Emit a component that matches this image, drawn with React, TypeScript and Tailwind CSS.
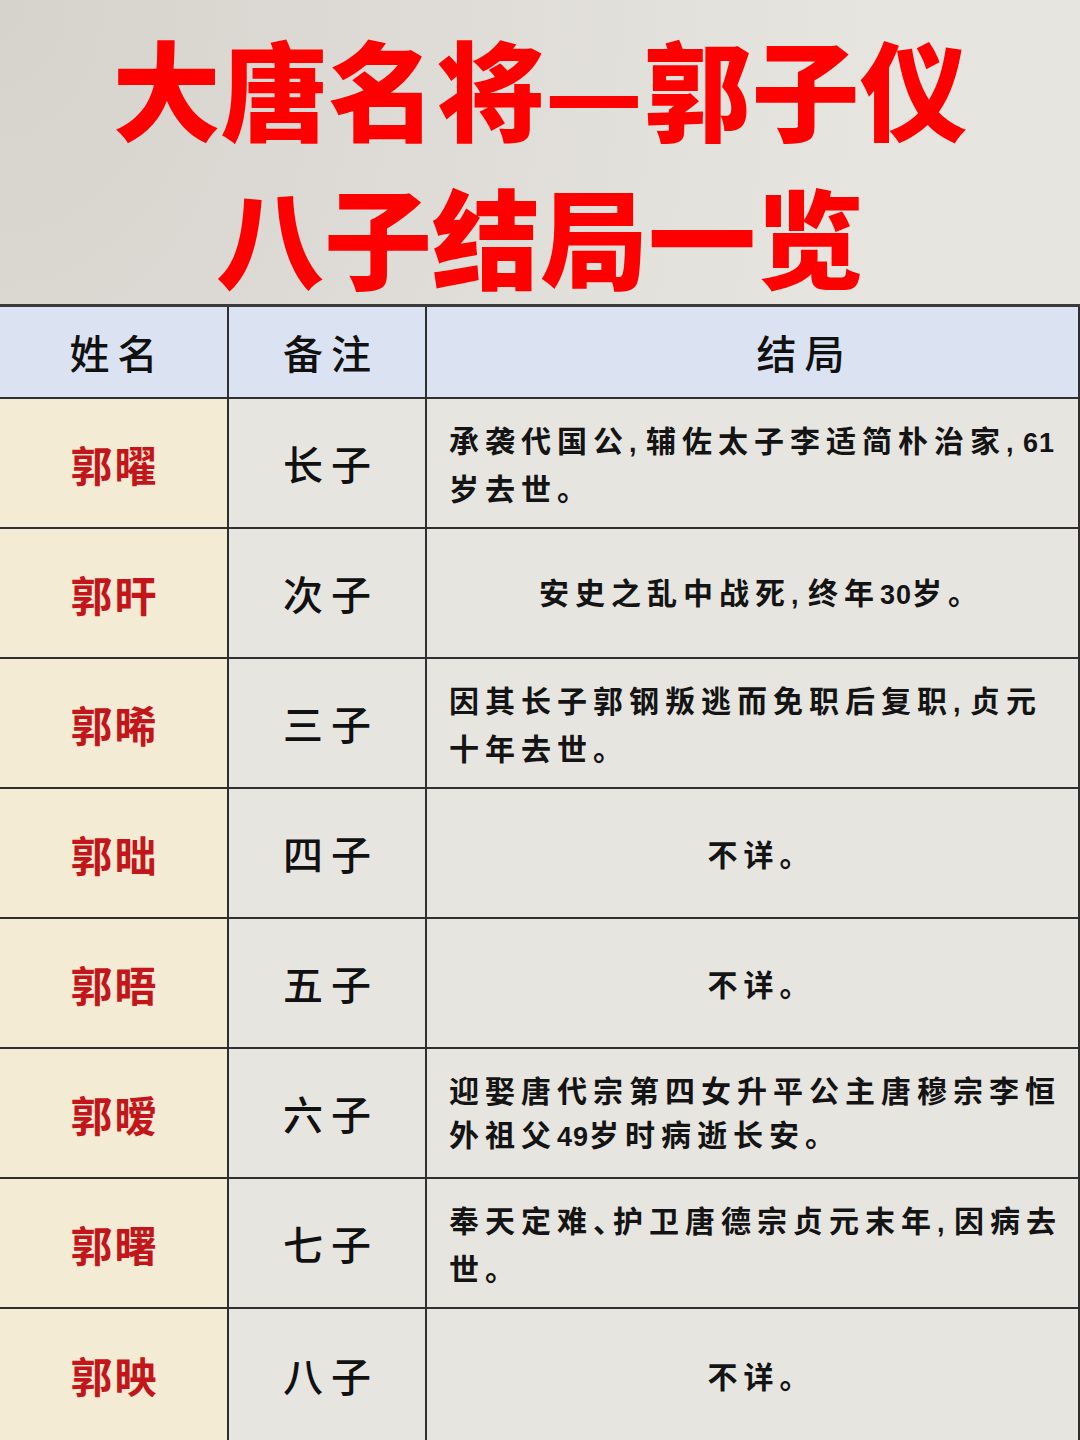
import React from "react";

const rows: { name: string; note: string; lines: string[]; center?: boolean }[] = [
  { name: "郭曜", note: "长子", lines: ["承袭代国公, 辅佐太子李适简朴治家, 61", "岁去世。"] },
  { name: "郭旰", note: "次子", lines: ["安史之乱中战死, 终年30岁。"], center: true },
  { name: "郭晞", note: "三子", lines: ["因其长子郭钢叛逃而免职后复职, 贞元", "十年去世。"] },
  { name: "郭昢", note: "四子", lines: ["不详。"], center: true },
  { name: "郭晤", note: "五子", lines: ["不详。"], center: true },
  { name: "郭暧", note: "六子", lines: ["迎娶唐代宗第四女升平公主唐穆宗李恒", "外祖父49岁时病逝长安。"] },
  { name: "郭曙", note: "七子", lines: ["奉天定难、护卫唐德宗贞元末年, 因病去", "世。"] },
  { name: "郭映", note: "八子", lines: ["不详。"], center: true },
];

const font = { fontFamily: '"Noto Sans CJK SC", "Noto Sans", sans-serif' };
const latin = { fontFamily: '"Liberation Sans", "Noto Sans CJK SC", sans-serif' };

function Line({ text }: { text: string }) {
  const parts = text.match(/[0-9, ]+|、|[^0-9, 、]+/g) || [];
  return (
    <div className="whitespace-nowrap">
      {parts.map((p, i) =>
        p === "、" ? (
          <span key={i} className="tracking-[-10px]">
            {p}
          </span>
        ) : /^[0-9, ]+$/.test(p) ? (
          <span key={i} style={latin} className="tracking-[1px] text-[27px] font-bold">
            {p}
          </span>
        ) : (
          <span key={i}>{p}</span>
        )
      )}
    </div>
  );
}

export default function App() {
  return (
    <div
      className="w-[1080px] h-[1440px] overflow-hidden bg-[radial-gradient(ellipse_at_top_left,#d6d3cd,#e6e4df_55%,#e9e7e2)]"
      style={font}
    >
      <div className="h-[304px] pt-[12px] flex flex-col items-center text-[108px] leading-[148px] font-black text-[#fe0000]">
        <div className="whitespace-nowrap">大唐名将—郭子仪</div>
        <div className="whitespace-nowrap">八子结局一览</div>
      </div>
      <div className="grid grid-cols-[227px_196px_1fr] grid-rows-[90px_repeat(7,128px)_131px] gap-[2px] bg-[#2f2f2f] border-t-[3px] border-[#3a3a3a] pr-[2px]">
        <div className="bg-[#dbe3f2] flex items-center justify-center text-[40px] tracking-[8px] pl-[8px] font-medium text-[#111]">
          姓名
        </div>
        <div className="bg-[#dbe3f2] flex items-center justify-center text-[40px] tracking-[8px] pl-[8px] font-medium text-[#111]">
          备注
        </div>
        <div className="bg-[#dbe3f2] flex items-center justify-center text-[40px] tracking-[8px] pl-[104px] font-medium text-[#111]">
          结局
        </div>
        {rows.map((r) => (
          <React.Fragment key={r.name}>
            <div className="bg-[#f4ebd4] flex items-center justify-center text-[42px] tracking-[2px] pl-[2px] font-bold text-[#c3161b]">
              {r.name}
            </div>
            <div className="bg-[#e7e5e0] flex items-center justify-center text-[40px] tracking-[8px] pl-[8px] font-medium text-[#111]">
              {r.note}
            </div>
            <div
              className={
                r.center
                  ? "bg-[#e7e5e0] flex flex-col justify-center items-center text-[30px] leading-[44px] tracking-[6px] pl-[18px] font-semibold text-[#141414]"
                  : "bg-[#e7e5e0] flex flex-col justify-center items-start text-[30px] leading-[44px] tracking-[6px] pl-[22px] font-semibold text-[#141414]"
              }
            >
              {r.lines.map((l) => (
                <Line key={l} text={l} />
              ))}
            </div>
          </React.Fragment>
        ))}
      </div>
    </div>
  );
}
